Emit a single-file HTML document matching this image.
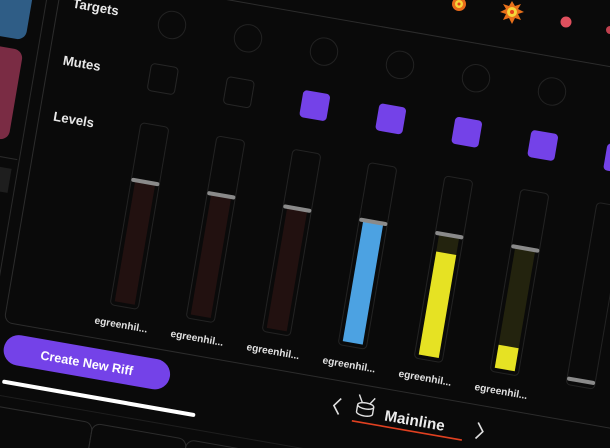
<!DOCTYPE html>
<html><head><meta charset="utf-8"><style>
html,body{margin:0;padding:0;background:#0a0a0a;width:610px;height:448px;overflow:hidden}
svg{display:block}
text{font-family:"Liberation Sans",sans-serif;font-weight:bold}
</style></head><body>
<svg width="610" height="448" viewBox="0 0 610 448" xmlns="http://www.w3.org/2000/svg">
<rect width="610" height="448" fill="#0a0a0a"/>
<g>
<circle cx="459" cy="4" r="7" fill="#e86a1a"/><circle cx="459" cy="4" r="4" fill="#f5d43a"/><circle cx="459" cy="4" r="1.5" fill="#e83a1a"/>
<polygon points="512,1 515,6 521,4 518,9 524,12 518,14 521,20 515,18 512,24 509,18 503,20 506,14 500,12 506,9 503,4 509,6" fill="#e8701a"/>
<circle cx="512" cy="12" r="5" fill="#f5d43a"/><circle cx="512" cy="12" r="2" fill="#e8401a"/>
<circle cx="566" cy="22" r="5.5" fill="#e0505e"/>
<circle cx="610" cy="30" r="4" fill="#c0404e"/>
</g>
<g transform="matrix(1 0.175 -0.17 1 172 25)">
  <rect x="-260" y="-120" width="120" height="160" rx="9" fill="#2f5d86"/>
  <rect x="-260" y="50" width="120" height="90" rx="9" fill="#7a2c44"/>
  <line x1="-220" y1="157" x2="-128" y2="157" stroke="#2a2a2a" stroke-width="1"/>
  <rect x="-200" y="167" width="68" height="24" fill="#1e1e1e"/>
  <line x1="-126" y1="-120" x2="-126" y2="330" stroke="#2a2a2a" stroke-width="1"/>
  <rect x="-114" y="-34" width="900" height="351" rx="8" fill="none" stroke="#2c2c2c" stroke-width="1"/>
  <text x="-100" y="0" fill="#e8e8e8" font-size="13">Targets</text>
  <text x="-100" y="57" fill="#e8e8e8" font-size="13">Mutes</text>
  <text x="-100" y="113" fill="#e8e8e8" font-size="13">Levels</text>

  <g fill="none" stroke="#222" stroke-width="1">
    <circle cx="0" cy="0" r="13.5"/><circle cx="76" cy="0" r="13.5"/><circle cx="152" cy="0" r="13.5"/><circle cx="228" cy="0" r="13.5"/><circle cx="304" cy="0" r="13.5"/><circle cx="380" cy="0" r="13.5"/><circle cx="456" cy="0" r="13.5"/>
  </g>
  <rect x="-13.5" y="40.5" width="27" height="27" rx="4" fill="none" stroke="#262626"/>
  <rect x="62.5" y="40.5" width="27" height="27" rx="4" fill="none" stroke="#262626"/>
  <g fill="#7442e8">
    <rect x="138.5" y="40.5" width="27" height="27" rx="4"/>
    <rect x="214.5" y="40.5" width="27" height="27" rx="4"/>
    <rect x="290.5" y="40.5" width="27" height="27" rx="4"/>
    <rect x="366.5" y="40.5" width="27" height="27" rx="4"/>
    <rect x="442.5" y="40.5" width="27" height="27" rx="4"/>
  </g>
  <g fill="none" stroke="#232323">
    <rect x="-14" y="100" width="28" height="182" rx="4"/>
    <rect x="62" y="100" width="28" height="182" rx="4"/>
    <rect x="138" y="100" width="28" height="182" rx="4"/>
    <rect x="214" y="100" width="28" height="182" rx="4"/>
    <rect x="290" y="100" width="28" height="182" rx="4"/>
    <rect x="366" y="100" width="28" height="182" rx="4"/>
    <rect x="442" y="100" width="28" height="182" rx="4"/>
  </g>
  <rect x="-10" y="157" width="20" height="121" fill="#221110"/>
  <rect x="66" y="157" width="20" height="121" fill="#221110"/>
  <rect x="142" y="157" width="20" height="121" fill="#221110"/>
  <rect x="218" y="157" width="20" height="121" fill="#4ca2e2"/>
  <rect x="294" y="157" width="20" height="121" fill="#23230e"/>
  <rect x="294" y="175" width="20" height="103" fill="#e6e223"/>
  <rect x="370" y="157" width="20" height="121" fill="#23230e"/>
  <rect x="370" y="255" width="20" height="23" fill="#e6e223"/>
  <g fill="#8a8a8a">
    <rect x="-14" y="155" width="28" height="4" rx="2"/>
    <rect x="62" y="155" width="28" height="4" rx="2"/>
    <rect x="138" y="155" width="28" height="4" rx="2"/>
    <rect x="214" y="155" width="28" height="4" rx="2"/>
    <rect x="290" y="155" width="28" height="4" rx="2"/>
    <rect x="366" y="155" width="28" height="4" rx="2"/>
    <rect x="442" y="274" width="28" height="4" rx="2"/>
  </g>
  <g fill="#e0e0e0" font-size="10" text-anchor="middle">
    <text x="0" y="303">egreenhil...</text>
    <text x="76" y="303">egreenhil...</text>
    <text x="152" y="303">egreenhil...</text>
    <text x="228" y="303">egreenhil...</text>
    <text x="304" y="303">egreenhil...</text>
    <text x="380" y="303">egreenhil...</text>
  </g>
  <rect x="-110" y="327" width="166" height="30" rx="15" fill="#7442e8"/>
  <text x="-27" y="347" fill="#ffffff" font-size="12.5" text-anchor="middle">Create New Riff</text>
  <rect x="-106" y="373" width="193" height="4" rx="2" fill="#ffffff"/>
  <line x1="-200" y1="389" x2="700" y2="389" stroke="#1e1e1e"/>
  <g fill="none" stroke="#2c2c2c">
    <rect x="-200" y="400" width="189" height="60" rx="8"/>
    <rect x="-11" y="400" width="94" height="60" rx="8"/>
    <rect x="83" y="400" width="94" height="60" rx="8"/>
  </g>
  <path d="M226 334 L220 342 L226 350" fill="none" stroke="#e0e0e0" stroke-width="1.6"/>
  <path d="M363 334 L369 342 L363 350" fill="none" stroke="#e0e0e0" stroke-width="1.6"/>
  <g fill="none" stroke="#e0e0e0" stroke-width="1.4">
    <ellipse cx="251" cy="337" rx="8" ry="3"/>
    <path d="M243 337 V344 A8 3 0 0 0 259 344 V337"/>
    <path d="M247 334 L243 327 M255 334 L259 328"/>
  </g>
  <text x="271" y="348" fill="#ececec" font-size="15">Mainline</text>
  <rect x="240" y="353" width="110" height="1.6" fill="#e04020"/>
</g>
</svg>
</body></html>
